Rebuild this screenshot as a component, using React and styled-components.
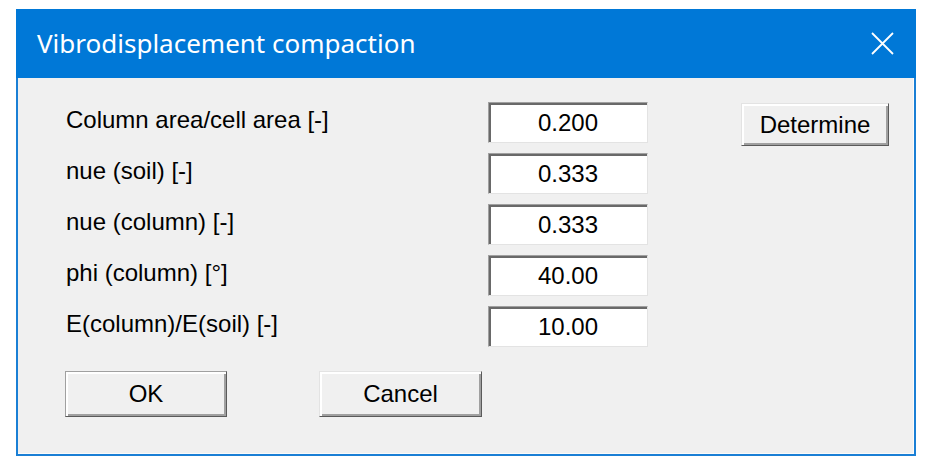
import React from "react";
import styled, { createGlobalStyle } from "styled-components";

const Global = createGlobalStyle`
  html, body { margin: 0; padding: 0; background: #ffffff; }
  body { font-family: "Liberation Sans", Arial, sans-serif; }
`;

const Window = styled.div`
  margin: 9px 0 0 16px;
  width: 900px;
  height: 447px;
  box-sizing: border-box;
  border: 2px solid #1a7fd5;
  border-top: none;
  display: flex;
  flex-direction: column;
`;

const TitleBar = styled.div`
  height: 69px;
  flex: none;
  background: #0078d7;
  display: flex;
  align-items: center;
  justify-content: space-between;
  padding: 0 22px 0 21px;
  box-sizing: border-box;
  margin: 0 -2px;
`;

const Title = styled.div`
  color: #ffffff;
  font-family: "Noto Sans", "Open Sans", sans-serif;
  font-size: 26px;
  line-height: 1;
  margin-top: -2px;
`;

const CloseBtn = styled.div`
  width: 24px;
  height: 24px;
  display: flex;
  align-items: center;
  justify-content: center;
  margin-top: -1px;
`;

const Body = styled.div`
  flex: 1;
  background: #f0f0f0;
  box-shadow: inset -1px -1px 0 #fbfbfb;
  padding: 24px 0 0 48px;
  box-sizing: border-box;
`;

const Grid = styled.div`
  display: grid;
  grid-template-columns: 422px 160px 241px;
  grid-auto-rows: 41px;
  row-gap: 10px;
`;

const Label = styled.div`
  font-size: 24px;
  line-height: 27px;
  padding-top: 4px;
  color: #000;
  white-space: nowrap;
`;

const Field = styled.input`
  width: 160px;
  height: 41px;
  box-sizing: border-box;
  margin: 0;
  padding: 0;
  background: #ffffff;
  border: 1px solid;
  border-color: #a0a0a0 #e3e3e3 #e3e3e3 #a0a0a0;
  box-shadow: inset 2px 2px 0 #696969;
  font-family: "Liberation Sans", Arial, sans-serif;
  font-size: 24px;
  color: #000;
  text-align: center;
  outline: none;
`;

const Button = styled.button`
  box-sizing: border-box;
  width: ${(p) => p.$w}px;
  height: ${(p) => p.$h}px;
  margin: 0;
  padding: 0;
  background: #f0f0f0;
  font-family: "Liberation Sans", Arial, sans-serif;
  font-size: 24px;
  color: #000;
  border: 1px solid;
  border-color: ${(p) =>
    p.$default
      ? "#a0a0a0 #5a5a5a #5a5a5a #a0a0a0"
      : "#e3e3e3 #5a5a5a #5a5a5a #e3e3e3"};
  box-shadow: inset 2px 2px 0 #ffffff, inset -2px -2px 0 #a0a0a0;
  cursor: default;
`;

const DetermineCell = styled.div`
  grid-column: 3;
  grid-row: 1;
  justify-self: end;
  padding-top: 1px;
`;

const Actions = styled.div`
  display: flex;
  gap: 92px;
  margin: 24px 0 0 -1px;
`;

const rows = [
  ["Column area/cell area [-]", "0.200"],
  ["nue (soil) [-]", "0.333"],
  ["nue (column) [-]", "0.333"],
  ["phi (column) [°]", "40.00"],
  ["E(column)/E(soil) [-]", "10.00"],
];

export default function App() {
  return (
    <>
      <Global />
      <Window>
        <TitleBar>
          <Title>Vibrodisplacement compaction</Title>
          <CloseBtn>
            <svg width="23" height="23" viewBox="0 0 23 23">
              <path d="M1 1 L22 22 M22 1 L1 22" stroke="#ffffff" strokeWidth="1.8" fill="none" />
            </svg>
          </CloseBtn>
        </TitleBar>
        <Body>
          <Grid>
            {rows.map(([label, value], i) => (
              <React.Fragment key={i}>
                <Label style={{ gridRow: i + 1, gridColumn: 1 }}>{label}</Label>
                <Field style={{ gridRow: i + 1, gridColumn: 2 }} readOnly defaultValue={value} />
              </React.Fragment>
            ))}
            <DetermineCell>
              <Button $w={148} $h={43}>Determine</Button>
            </DetermineCell>
          </Grid>
          <Actions>
            <Button $w={162} $h={46} $default>OK</Button>
            <Button $w={163} $h={46}>Cancel</Button>
          </Actions>
        </Body>
      </Window>
    </>
  );
}
